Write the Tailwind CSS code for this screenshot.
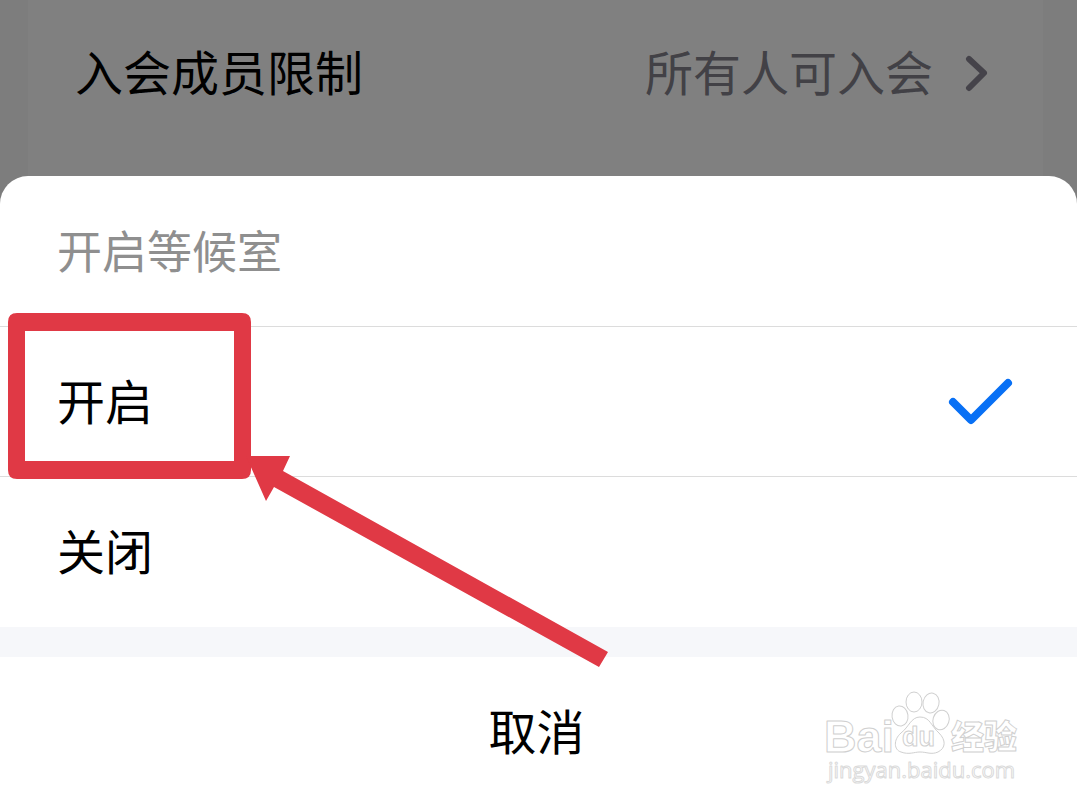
<!DOCTYPE html>
<html lang="zh-CN">
<head>
<meta charset="utf-8">
<meta name="viewport" content="width=device-width, initial-scale=1">
<title>开启等候室</title>
<script src="https://cdn.jsdelivr.net/npm/@tailwindcss/browser@4"></script>
</head>
<body class="min-h-screen bg-[#7d7d7d] font-['Noto_Sans_CJK_SC',sans-serif] text-5xl text-black">
<div class="flex min-h-screen flex-col">
  <main class="ml-7 mr-[34px] h-44 bg-[#808080]">
    <button type="button" class="flex h-37 w-full items-center justify-between pl-[47px] pr-[54px] text-left">
      <span class="pb-2">入会成员限制</span>
      <span class="flex items-center gap-8 text-[#424146]">
        <span class="pb-2">所有人可入会</span>
        <svg class="h-10 w-6" viewBox="0 0 24 40" fill="none" stroke="#45434a" stroke-width="6" stroke-linecap="round" stroke-linejoin="round" aria-hidden="true"><path d="M4 5 19 19 4 34"/></svg>
      </span>
    </button>
  </main>

  <section class="relative flex grow flex-col rounded-t-[28px] bg-white" aria-labelledby="sheet-title">
    <h1 id="sheet-title" class="flex h-[150px] items-center px-[57px] pb-1 text-[45px] text-[#8f8f8f]">开启等候室</h1>
    <button type="button" class="flex h-[150px] items-center justify-between border-t border-[#dcdcdc] px-[57px] text-left" aria-pressed="true">
      <span class="pb-1.5">开启</span>
      <svg class="h-12 w-[72px]" viewBox="0 0 72 48" fill="none" stroke="#0870f5" stroke-width="8" stroke-linecap="round" stroke-linejoin="round" aria-hidden="true"><path d="M5 24 23 42 60 5"/></svg>
    </button>
    <button type="button" class="flex h-[151px] items-center border-t border-[#dcdcdc] px-[57px] pb-1.5 text-left">关闭</button>
    <div class="h-[30px] bg-[#f6f7fa]"></div>
    <button type="button" class="h-[150px] pb-1.5 pr-1 text-center">取消</button>

    <!-- Tutorial highlight around the first option -->
    <svg class="pointer-events-none absolute left-2 top-[137px] h-[166px] w-[244px]" viewBox="0 0 244 166" aria-hidden="true"><path fill="#e03945" fill-rule="evenodd" d="M9 0H234Q243 0 243 9V157Q243 166 234 166H9Q0 166 0 157V9Q0 0 9 0ZM17 18V148H226V18Z"/></svg>
    <svg class="pointer-events-none absolute left-[244px] top-[280px] h-[212px] w-[364px]" viewBox="244 456 364 212" aria-hidden="true"><path fill="#e03945" d="M246 456 290 456 283 471 608 652 599 667 274 487 266 501Z"/></svg>

    <!-- Watermark -->
    <svg class="pointer-events-none absolute bottom-5 right-[47px] h-[100px] w-[210px]" viewBox="820 687 210 100" role="img" aria-label="Baidu 经验 jingyan.baidu.com" fill="#ffffff" stroke="#d0d0d0" stroke-width="1" stroke-linejoin="round">
      <text x="824" y="752" font-family="Liberation Sans, sans-serif" font-weight="bold" font-size="45">Bai</text>
      <ellipse cx="900" cy="716" rx="8" ry="10" transform="rotate(-8 900 716)"/>
      <ellipse cx="914" cy="702" rx="8" ry="10"/>
      <ellipse cx="931" cy="703" rx="8" ry="10" transform="rotate(12 931 703)"/>
      <ellipse cx="941" cy="720" rx="8" ry="10" transform="rotate(18 941 720)"/>
      <path d="M920 717C911 717 909 727 901 733C893 740 894 750 901 752C909 755 914 752 920 752C927 752 931 755 938 752C946 748 946 740 939 733C931 726 930 717 920 717Z"/>
      <text x="902" y="746" font-family="Liberation Sans, sans-serif" font-weight="bold" font-size="27">du</text>
      <text x="951" y="749" font-family="Noto Sans CJK SC, sans-serif" font-weight="900" font-size="33">经验</text>
      <text x="828" y="778" font-family="Open Sans, sans-serif" font-weight="400" font-size="22" stroke="#dadada">jingyan.baidu.com</text>
    </svg>
  </section>
</div>
</body>
</html>
